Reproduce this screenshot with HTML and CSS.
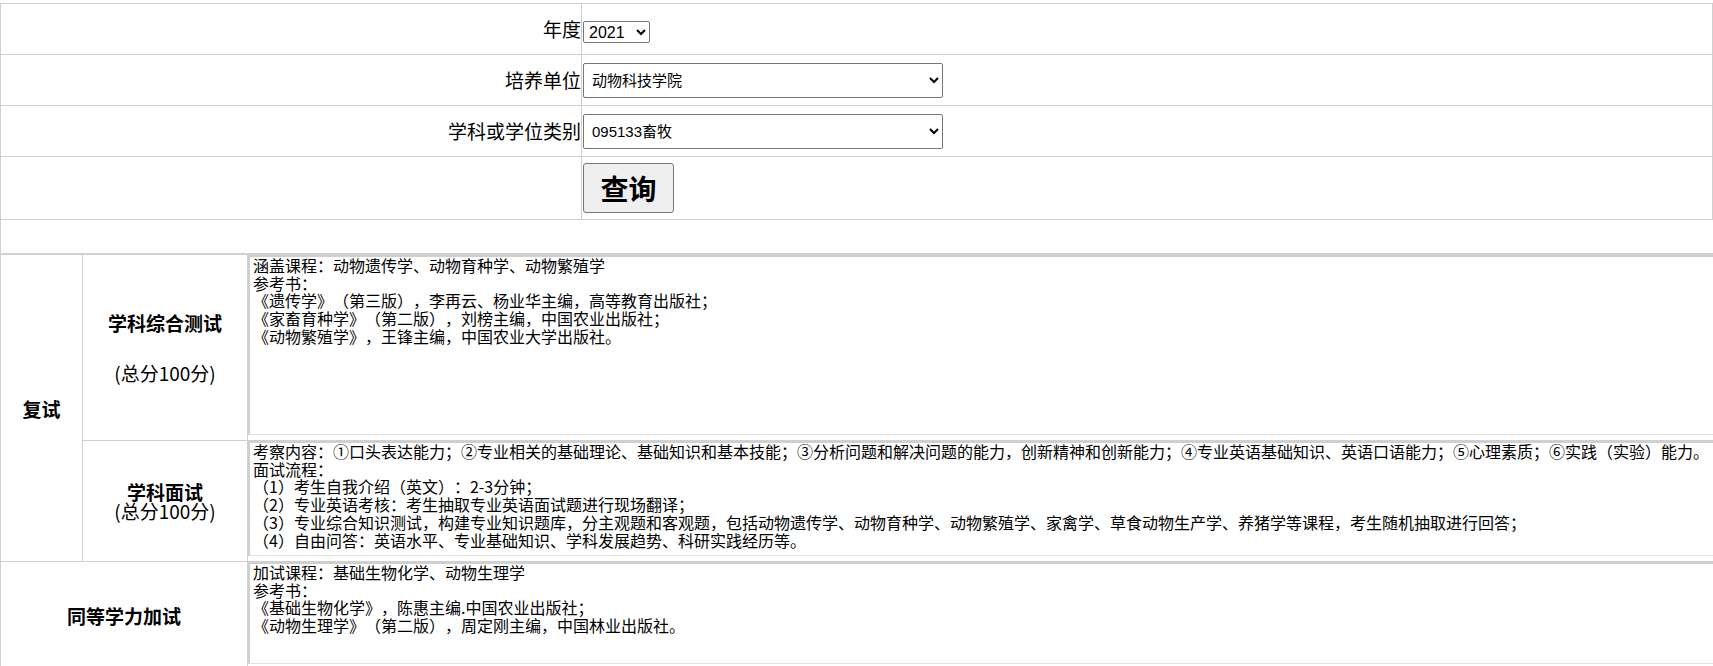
FILE: index.html
```html
<!DOCTYPE html>
<html lang="zh-CN">
<head>
  <meta charset="UTF-8">
  <title>复试科目查询</title>
  <link rel="stylesheet" href="styles.css">
</head>
<body>
  <table class="query">
    <tr>
      <td class="label">年度</td>
      <td class="field">
        <select class="year-select">
          <option>2021</option>
        </select>
      </td>
    </tr>
    <tr>
      <td class="label">培养单位</td>
      <td class="field">
        <select class="wide-select">
          <option>动物科技学院</option>
        </select>
      </td>
    </tr>
    <tr>
      <td class="label">学科或学位类别</td>
      <td class="field">
        <select class="wide-select">
          <option>095133畜牧</option>
        </select>
      </td>
    </tr>
    <tr class="btn-row">
      <td class="label"></td>
      <td class="field"><button class="query-btn">查询</button></td>
    </tr>
    <tr class="spacer">
      <td colspan="2"></td>
    </tr>
  </table>

  <table class="plan">
    <colgroup>
      <col class="col-stage">
      <col class="col-subject">
      <col class="col-content">
    </colgroup>
    <tr class="row-test">
      <td class="stage" rowspan="2"><strong>复试</strong></td>
      <td class="subject spaced"><strong>学科综合测试</strong><br><br>(总分100分)</td>
      <td class="content">
        <textarea class="box box-test" readonly>涵盖课程：动物遗传学、动物育种学、动物繁殖学
参考书：
《遗传学》（第三版），李再云、杨业华主编，高等教育出版社；
《家畜育种学》（第二版），刘榜主编，中国农业出版社；
《动物繁殖学》，王锋主编，中国农业大学出版社。</textarea>
      </td>
    </tr>
    <tr class="row-interview">
      <td class="subject tight"><strong>学科面试</strong><br>(总分100分)</td>
      <td class="content">
        <textarea class="box box-interview" readonly>考察内容：①口头表达能力；②专业相关的基础理论、基础知识和基本技能；③分析问题和解决问题的能力，创新精神和创新能力；④专业英语基础知识、英语口语能力；⑤心理素质；⑥实践（实验）能力。
面试流程：
（1）考生自我介绍（英文）：2-3分钟；
（2）专业英语考核：考生抽取专业英语面试题进行现场翻译；
（3）专业综合知识测试，构建专业知识题库，分主观题和客观题，包括动物遗传学、动物育种学、动物繁殖学、家禽学、草食动物生产学、养猪学等课程，考生随机抽取进行回答；
（4）自由问答：英语水平、专业基础知识、学科发展趋势、科研实践经历等。</textarea>
      </td>
    </tr>
    <tr class="row-extra">
      <td class="subject" colspan="2"><strong>同等学力加试</strong></td>
      <td class="content">
        <textarea class="box box-extra" readonly>加试课程：基础生物化学、动物生理学
参考书：
《基础生物化学》，陈惠主编.中国农业出版社；
《动物生理学》（第二版），周定刚主编，中国林业出版社。</textarea>
      </td>
    </tr>
  </table>
</body>
</html>
```

FILE: styles.css
```css
html {
  overflow: hidden;
}

body {
  margin: 0;
  padding-top: 3px;
  font-family: "Noto Sans CJK SC", "Liberation Sans", sans-serif;
  font-size: 19px;
  color: #000;
  background: #fff;
}

table {
  border-collapse: collapse;
}

td {
  border: 1px solid #d0d0d0;
  padding: 0;
}

/* query form */
.query {
  width: 1713px;
}

.query td {
  height: 50px;
  vertical-align: middle;
}

.query .label {
  width: 580px;
  text-align: right;
  line-height: 22px;
}

.query .field {
  padding-left: 1px;
}

.query .btn-row td {
  height: 62px;
}

.query .spacer td {
  height: 33px;
  border-right: none;
}

select {
  font-family: "Liberation Sans", "Noto Sans CJK SC", sans-serif;
  font-size: 16px;
  color: #000;
  background: #fff;
  border: 1px solid #767676;
  border-radius: 2px;
  vertical-align: middle;
}

.year-select {
  width: 67px;
  height: 22px;
  margin-top: 2px;
  padding: 0 0 0 1px;
}

.wide-select {
  width: 360px;
  height: 35px;
  padding: 0 0 0 4px;
  font-size: 15px;
}

.query-btn {
  width: 91px;
  height: 50px;
  margin-top: -1px;
  font-family: "Noto Sans CJK SC", "Liberation Sans", sans-serif;
  font-size: 28px;
  font-weight: 700;
  line-height: 1;
  color: #000;
  background: #efefef;
  border: 1px solid #767676;
  border-radius: 3px;
  vertical-align: middle;
}

/* exam plan */
.plan {
  width: 1760px;
  table-layout: fixed;
  border-top: 1px solid #d0d0d0;
}

.col-stage {
  width: 82px;
}

.col-subject {
  width: 165px;
}

.plan .stage {
  text-align: center;
  vertical-align: middle;
}

.plan .subject {
  text-align: center;
  vertical-align: middle;
}

.plan .spaced {
  line-height: 25px;
}

.plan .tight {
  line-height: 19px;
}

.plan .content {
  vertical-align: top;
}

.box {
  display: block;
  width: 100%;
  margin: 0 0 5px 0;
  padding: 0 2px 0 3px;
  font-family: "Noto Sans CJK SC", "Liberation Sans", sans-serif;
  font-size: 16px;
  line-height: 17.7px;
  text-spacing-trim: space-all;
  color: #000;
  border-style: solid;
  border-width: 2px 1px 1px 2px;
  border-color: #cfcfcf #e3e3e3 #e3e3e3 #cfcfcf;
  resize: none;
  overflow: hidden;
  box-sizing: border-box;
}

.box-test {
  height: 180px;
}

.box-interview {
  height: 115px;
}

.box-extra {
  height: 102px;
}
```
